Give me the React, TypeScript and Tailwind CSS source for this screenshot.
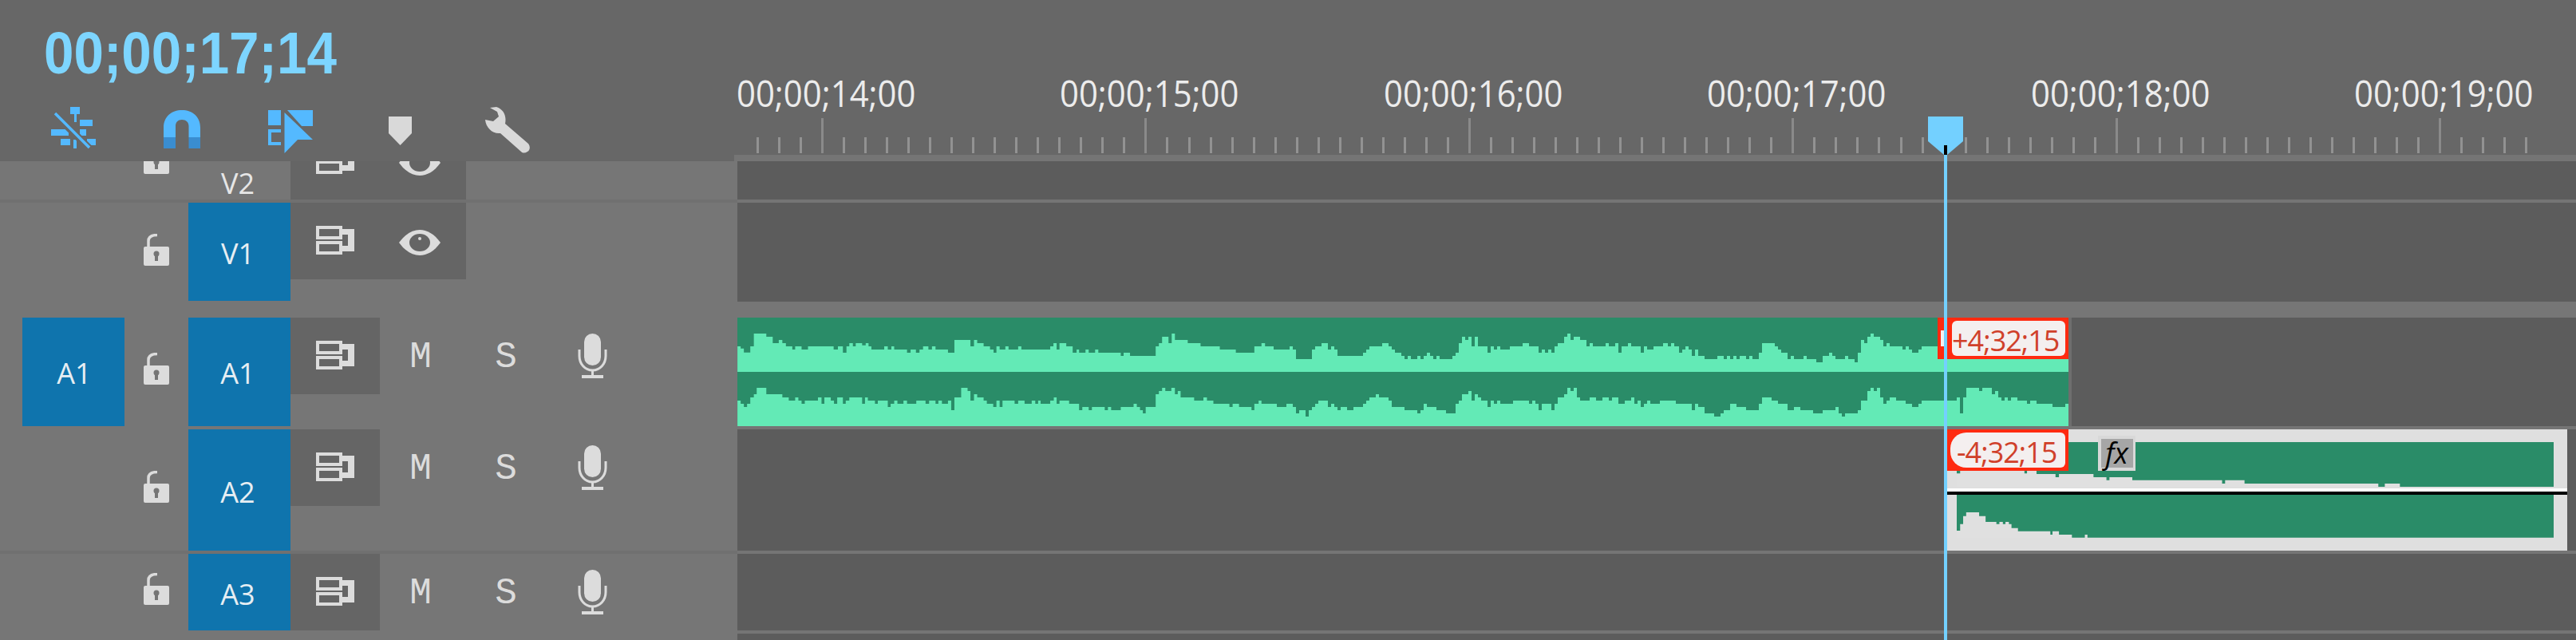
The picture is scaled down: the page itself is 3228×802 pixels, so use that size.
import React from 'react'

type Step = [number, number]

const seg1: Step[] = [[54,132],[63,140],[72,155],[90,132],[100,84],[135,96],[153,120],[170,108],[180,120],[190,132],[208,144],[216,132],[234,144],[252,132],[324,144],[336,132],[350,156],[360,132],[368,120],[378,132],[386,120],[404,128],[414,120],[422,132],[430,144],[466,132],[476,144],[486,132],[494,144],[530,156],[540,144],[555,156],[565,144],[575,132],[590,144],[600,132],[610,144],[645,156],[663,108],[708,132],[718,108],[727,120],[745,132],[763,144],[773,156],[781,132],[790,144],[806,132],[815,144],[842,132],[851,144],[932,132],[941,120],[950,144],[958,120],[977,132],[995,156],[1006,144],[1013,156],[1031,144],[1040,156],[1058,144],[1067,156],[1130,168],[1138,156],[1156,168],[1228,132],[1237,120],[1246,96],[1264,120],[1273,84],[1282,108],[1318,120],[1354,132],[1408,144],[1453,156],[1505,132],[1525,120],[1535,132]]
const seg2: Step[] = [[0,120],[18,132],[78,120],[90,132],[102,168],[162,132],[174,120],[198,108],[222,132],[234,120],[246,132],[258,156],[354,144],[366,132],[378,120],[426,108],[450,120],[462,132],[474,144],[498,156],[510,168],[522,156],[534,168],[558,156],[570,168],[582,156],[594,144],[606,156],[618,168],[630,156],[642,168],[690,156],[702,144],[714,108],[726,84],[738,96],[750,84],[762,120],[774,84],[786,120],[822,144],[834,120],[846,132],[858,120],[870,132],[906,120],[954,108],[978,120],[1014,144],[1026,132],[1038,144],[1050,132],[1062,144],[1074,120],[1086,108],[1110,84],[1122,72],[1134,96],[1146,84],[1170,96],[1194,120],[1206,108],[1218,120],[1266,108],[1278,120],[1302,108],[1314,144],[1326,120],[1350,108],[1362,120],[1398,144],[1410,120],[1422,132],[1446,120],[1482,108]]
const seg3: Step[] = [[0,120],[12,108],[24,120],[42,144],[54,132],[66,120],[78,132],[90,156],[102,132],[114,156],[138,168],[186,156],[210,168],[222,156],[234,168],[246,156],[258,168],[270,156],[294,168],[306,156],[318,168],[342,144],[354,108],[402,120],[414,132],[426,144],[450,168],[462,156],[474,168],[510,156],[522,168],[558,180],[582,156],[606,144],[618,156],[630,168],[666,156],[678,168],[702,180],[714,144],[726,96],[738,108],[750,84],[762,72],[774,84],[798,96],[810,120],[822,108],[834,120],[882,132],[894,120],[906,132],[918,144],[942,132],[954,120]]

const low1: Step[] = [[54,336],[63,348],[72,360],[81,348],[90,324],[100,312],[108,288],[135,312],[180,324],[198,336],[216,324],[225,336],[234,348],[243,336],[280,324],[290,348],[298,324],[316,336],[325,348],[334,324],[350,348],[358,336],[368,324],[404,348],[412,324],[420,336],[440,348],[448,336],[476,360],[484,348],[494,336],[503,348],[520,336],[530,348],[556,336],[582,348],[592,336],[610,348],[618,336],[628,348],[645,336],[654,372],[663,324],[682,288],[700,300],[708,336],[718,312],[727,324],[745,336],[754,348],[772,360],[781,336],[790,360],[798,336],[832,348],[842,336],[860,348],[880,336],[890,348],[898,336],[905,348],[932,336],[942,324],[950,348],[958,336],[985,348],[1013,372],[1022,360],[1040,372],[1049,360],[1085,372],[1094,360],[1103,372],[1130,360],[1166,348],[1175,360],[1184,372],[1192,384],[1200,360],[1228,312],[1237,300],[1246,288],[1255,300],[1272,288],[1282,312],[1290,300],[1298,324],[1336,336],[1362,324],[1372,336],[1390,348],[1435,360],[1444,348],[1462,360],[1497,372],[1505,348],[1517,336],[1525,348]]
const low2: Step[] = [[0,336],[30,348],[66,336],[90,348],[102,372],[114,360],[138,384],[150,360],[162,348],[174,336],[186,324],[222,348],[234,336],[246,348],[258,360],[270,348],[294,360],[318,348],[354,336],[366,324],[378,312],[402,300],[414,312],[450,324],[462,348],[510,360],[558,372],[570,360],[582,336],[594,348],[630,360],[666,372],[702,336],[714,324],[726,300],[750,288],[762,324],[774,300],[786,312],[798,324],[810,324],[822,348],[834,324],[846,336],[858,324],[870,336],[918,324],[978,336],[990,324],[1002,336],[1014,360],[1026,336],[1062,360],[1074,336],[1086,312],[1110,300],[1122,276],[1134,288],[1146,276],[1158,312],[1170,324],[1206,312],[1230,324],[1254,312],[1278,324],[1290,312],[1314,336],[1338,324],[1362,312],[1374,336],[1386,324],[1398,348],[1410,336],[1422,324],[1434,336],[1470,324]]
const low3: Step[] = [[0,324],[30,336],[90,360],[102,336],[114,348],[138,372],[174,384],[198,372],[210,360],[234,336],[258,348],[294,360],[342,336],[354,312],[390,324],[414,336],[450,360],[474,348],[498,360],[546,372],[582,360],[630,348],[642,372],[654,384],[666,372],[714,360],[726,324],[750,288],[762,276],[774,288],[786,276],[798,312],[810,336],[822,324],[834,312],[858,324],[894,336],[918,348],[942,336],[954,324],[1086,312],[1098,372],[1110,312],[1122,276],[1170,288],[1182,276],[1218,300],[1230,288],[1242,312],[1254,324],[1266,312],[1278,324],[1290,312],[1314,324],[1350,336],[1362,324],[1386,336],[1446,348],[1494,336]]

const wide = (s: Step[], base: number, k: number, top: number): Step[] => s.map(([x, y]) => [base + x * k, top + y / 3])

const a1Upper = [...wide(seg1, 900, 0.4464, 390), ...wide(seg2, 1590, 1 / 3, 394), ...wide(seg3, 2090, 1 / 3, 394)]
const a1Lower = [...wide(low1, 900, 0.4464, 390), ...wide(low2, 1590, 1 / 3, 394), ...wide(low3, 2090, 1 / 3, 394)]

const a2Upper = wide([[133,640],[141,628],[290,640],[296,628],[318,642],[362,654],[370,642],[450,654],[480,665],[487,654],[540,665],[748,678],[755,665],[800,678],[1110,690],[1125,678],[1160,690]], 2380, 0.5408, 380)
const a2Lower = wide([[133,855],[141,830],[148,800],[155,786],[175,786],[185,800],[200,822],[225,830],[232,822],[240,830],[246,822],[254,830],[260,845],[275,857],[350,870],[355,857],[370,870],[400,881],[430,870],[436,881]], 2380, 0.5408, 380)

function Wave({ steps, x, y, w, h, fill }: { steps: Step[]; x: number; y: number; w: number; h: number; fill: string }) {
    const bottom = y + h
    let d = `M${steps[0][0]} ${bottom}`
    steps.forEach(([sx, sy], i) => {
        const next = i < steps.length - 1 ? steps[i + 1][0] : x + w
        d += `L${sx} ${sy}L${next} ${sy}`
    })
    d += `L${x + w} ${bottom}Z`
    return (
        <svg viewBox={`${x} ${y} ${w} ${h}`} width={w} height={h} className="block" preserveAspectRatio="none">
            <path d={d} fill={fill} />
        </svg>
    )
}

const labels = ['00;00;14;00', '00;00;15;00', '00;00;16;00', '00;00;17;00', '00;00;18;00', '00;00;19;00']

function RulerTicks() {
    const ticks = []
    for (let i = -3; i < 80; i++) {
        const x = Math.round(1029 + i * 27.03)
        const major = ((i % 15) + 15) % 15 === 0
        ticks.push(<rect key={i} x={x} y={major ? 148 : 172} width="3" height={major ? 44 : 20} fill={major ? '#8a8a8a' : '#929292'} />)
    }
    return (
        <svg viewBox="920 148 2308 46" width="2308" height="46" className="block">
            {ticks}
        </svg>
    )
}

function Ripple() {
    return (
        <svg viewBox="64 134 56 58" width="56" height="58" className="block">
            <g fill="#54b9ff">
                <rect x="88" y="134" width="12" height="9" />
                <rect x="93" y="143" width="3" height="10" />
                <rect x="100" y="150" width="16" height="8" />
                <rect x="64" y="162" width="22" height="8" />
                <rect x="100" y="162" width="8" height="8" />
                <rect x="76" y="174" width="12" height="8" />
                <rect x="92" y="175" width="4" height="11" />
                <rect x="109" y="174" width="11" height="8" />
            </g>
            <path d="M68 142L112 186" stroke="#676767" strokeWidth="9" />
            <path d="M69 142L112 185" stroke="#54b9ff" strokeWidth="3.5" />
        </svg>
    )
}

function Magnet() {
    return (
        <svg viewBox="205 134 46 58" width="46" height="58" className="block">
            <path d="M205 172V160C205 146 215 138 228 138C241 138 251 146 251 160V172H236.5V158C236.5 153 233 150 228 150C223 150 220 153 220 158V172Z" fill="#54b9ff" />
            <path d="M205 172H220V186H205ZM236.5 172H251V186H236.5Z" fill="#3a8dd0" />
        </svg>
    )
}

function Linked() {
    return (
        <svg viewBox="336 134 56 58" width="56" height="58" className="block">
            <g fill="#54b9ff">
                <rect x="336" y="138" width="16" height="19" />
                <path d="M360 138H392V158H378Z" />
                <path d="M356.5 141L392 175H373L356.5 192Z" />
            </g>
            <path d="M352 164H338V180H352" fill="none" stroke="#54b9ff" strokeWidth="4" />
        </svg>
    )
}

function MarkerIcon() {
    return (
        <svg viewBox="487 134 29 58" width="29" height="58" className="block">
            <path d="M487 146H516V167L501.5 182L487 167Z" fill="#d9d9d9" />
        </svg>
    )
}

function Wrench() {
    return (
        <svg viewBox="607 134 57 58" width="57" height="58" className="block">
            <path d="M614 135L622 134C631 137 635 145 633 155L662 180C665 184 664 188 661 190C658 192 655 192 653 190L627 167C617 168 609 160 608 150L618 152L625 146L623 140Z" fill="#d9d9d9" />
        </svg>
    )
}

function LockIcon() {
    return (
        <svg viewBox="0 0 32 40" width="32" height="40" className="block shrink-0">
            <path d="M6 17V9C6 4 10 1.5 17 1.5" fill="none" stroke="#dcdcdc" strokeWidth="3.5" />
            <rect x="0" y="16" width="32" height="24" rx="2" fill="#dcdcdc" />
            <circle cx="16" cy="25" r="3.5" fill="#757575" />
            <rect x="14" y="26" width="4" height="8" fill="#757575" />
        </svg>
    )
}

function SyncIcon() {
    return (
        <svg viewBox="0 0 48 36" width="48" height="36" className="block shrink-0">
            <rect x="2" y="2" width="29" height="13" fill="none" stroke="#dcdcdc" strokeWidth="4" />
            <rect x="2" y="21" width="29" height="13" fill="none" stroke="#dcdcdc" strokeWidth="4" />
            <path d="M33 4H48V32H33V25H40V11H33Z" fill="#dcdcdc" />
        </svg>
    )
}

function EyeIcon() {
    return (
        <svg viewBox="0 0 52 32" width="52" height="32" className="block shrink-0">
            <path d="M0 16C8 5 17 0 26 0C35 0 44 5 52 16C44 27 35 32 26 32C17 32 8 27 0 16Z" fill="#dcdcdc" />
            <ellipse cx="26" cy="16" rx="13" ry="11" fill="#656565" />
            <circle cx="26" cy="11" r="2" fill="#dcdcdc" />
        </svg>
    )
}

function MicIcon() {
    return (
        <svg viewBox="0 0 37 56" width="37" height="56" className="block">
            <rect x="8" y="0" width="21" height="40" rx="10.5" fill="#dcdcdc" />
            <path d="M2 20V28C2 38 9 46 18.5 46C28 46 35 38 35 28V20" fill="none" stroke="#dcdcdc" strokeWidth="3" />
            <rect x="17" y="46" width="3" height="7" fill="#dcdcdc" />
            <rect x="5" y="52" width="27" height="4" fill="#dcdcdc" />
        </svg>
    )
}

function AudioHeader({ name, lockTop, labelPad, source }: { name: string; lockTop: string; labelPad: string; source?: string }) {
    return (
        <div className="w-[924px] h-full bg-[#767676] flex items-start pl-[28px] shrink-0">
            <div className="w-[128px] h-full">
                {source && (
                    <div className="h-full bg-[#0f74ad] flex items-center justify-center pt-[4px] pl-[2px] text-[36px] text-[#e6eef3]">{source}</div>
                )}
            </div>
            <div className={`w-[80px] flex justify-center ${lockTop}`}>
                <LockIcon />
            </div>
            <div className={`w-[128px] h-full bg-[#0f74ad] flex items-center justify-center pr-[4px] text-[36px] text-[#e6eef3] ${labelPad}`}>{name}</div>
            <div className="w-[112px] h-[96px] bg-[#656565] flex justify-center pt-[29px]">
                <SyncIcon />
            </div>
            <div className="w-[104px] flex justify-center pt-[26px] pr-[2px] text-[46px] leading-[48px] text-[#dcdcdc] font-['Liberation_Mono',monospace]">M</div>
            <div className="w-[108px] flex justify-center pt-[26px] text-[46px] leading-[48px] text-[#dcdcdc] font-['Liberation_Mono',monospace]">S</div>
            <div className="w-[108px] flex justify-center pt-[20px]">
                <MicIcon />
            </div>
        </div>
    )
}

function Badge({ text, sign }: { text: string; sign: 'plus' | 'minus' }) {
    const inner = sign === 'plus'
        ? 'rounded-[6px] ml-[2px]'
        : 'rounded-l-[20px] rounded-r-[6px] pl-[8px]'
    return (
        <div className="w-[152px] h-[52px] bg-[#ff2a10] p-[4px] flex">
            <div className={`flex-1 h-full bg-[#f4efef] flex items-center text-[36px] tracking-[-1px] leading-none text-[#d0402a] ${inner}`}>
                <span className="mt-[5px]">{text}</span>
            </div>
        </div>
    )
}

export default function App() {
    return (
        <div className="relative w-[3228px] h-[802px] overflow-hidden bg-[#5c5c5c] font-['Open_Sans',sans-serif]">
            {/* Timecode, toolbar and ruler */}
            <div className="flex h-[202px] bg-[#676767]">
                <div className="w-[920px] shrink-0">
                    <div className="pl-[55px] pt-[27px] h-[134px] text-[74px] leading-[80px] font-bold text-[#7dd5ff] font-['Liberation_Sans',sans-serif]">
                        <span className="inline-block origin-left scale-x-[0.91]">00;00;17;14</span>
                    </div>
                    <div className="flex pl-[64px]">
                        <Ripple />
                        <div className="ml-[85px]"><Magnet /></div>
                        <div className="ml-[85px]"><Linked /></div>
                        <div className="ml-[95px]"><MarkerIcon /></div>
                        <div className="ml-[91px]"><Wrench /></div>
                    </div>
                </div>
                <div className="flex-1 flex flex-col">
                    <div className="h-[148px] flex pl-[3px] pt-[88px]">
                        {labels.map((label) => (
                            <div key={label} className="w-[405.4px] shrink-0 text-[46px] leading-[56px] text-[#ececec]">
                                <span className="inline-block origin-left scale-x-[0.91]">{label}</span>
                            </div>
                        ))}
                    </div>
                    <RulerTicks />
                    <div className="h-[8px] bg-[#757575]" />
                </div>
            </div>

            {/* V2, scrolled up under the header, icons are clipped by their own cells */}
            <div className="flex h-[48px]">
                <div className="w-[924px] shrink-0 bg-[#767676] flex items-end pl-[156px]">
                    <div className="w-[80px] h-full overflow-hidden flex items-end justify-center pb-[32px]"><LockIcon /></div>
                    <div className="w-[128px] text-center text-[36px] leading-[40px] pr-[4px] text-[#e6e6e6]">V2</div>
                    <div className="w-[220px] h-full overflow-hidden bg-[#656565] flex items-end">
                        <div className="w-[112px] flex justify-center pb-[32px]"><SyncIcon /></div>
                        <div className="w-[100px] flex justify-center pb-[30px]"><EyeIcon /></div>
                    </div>
                </div>
                <div className="flex-1" />
            </div>
            <div className="flex h-[4px]">
                <div className="w-[924px] shrink-0 bg-[#707070]" />
                <div className="flex-1 bg-[#757575]" />
            </div>

            {/* V1 */}
            <div className="flex h-[124px]">
                <div className="w-[924px] shrink-0 bg-[#767676] flex items-start pl-[156px]">
                    <div className="w-[80px] flex justify-center pt-[39px]"><LockIcon /></div>
                    <div className="w-[128px] h-[123px] bg-[#0f74ad] flex items-center justify-center pt-[4px] pr-[4px] text-[36px] text-[#e6eef3]">V1</div>
                    <div className="w-[220px] h-[96px] bg-[#656565] flex">
                        <div className="w-[112px] flex justify-center pt-[29px]"><SyncIcon /></div>
                        <div className="w-[100px] flex justify-center pt-[34px]"><EyeIcon /></div>
                    </div>
                </div>
                <div className="flex-1" />
            </div>
            <div className="h-[20px] bg-[#767676]" />

            {/* A1 */}
            <div className="flex h-[136px]">
                <AudioHeader name="A1" source="A1" lockTop="pt-[44px]" labelPad="pt-[4px]" />
                <div className="flex-1 flex">
                    <div className="relative w-[1668px] h-full bg-[#2a8c68] shrink-0">
                        <Wave steps={a1Upper} x={924} y={398} w={1668} h={68} fill="#63eab6" />
                        <Wave steps={a1Lower} x={924} y={466} w={1668} h={68} fill="#63eab6" />
                        <div className="absolute right-0 top-0 flex items-start">
                            <div className="w-[12px] h-[52px] bg-[#ff2a10] flex items-center">
                                <div className="ml-[4px] w-[4px] h-[20px] bg-[#f4efef]" />
                            </div>
                            <Badge text="+4;32;15" sign="plus" />
                        </div>
                    </div>
                    <div className="w-[4px] h-full bg-[#6e6e6e]" />
                </div>
            </div>
            <div className="flex h-[4px]">
                <div className="w-[924px] shrink-0 bg-[#767676]" />
                <div className="flex-1 bg-[#757575]" />
            </div>

            {/* A2, selected clip */}
            <div className="flex h-[152px]">
                <AudioHeader name="A2" lockTop="pt-[52px]" labelPad="pt-[6px]" />
                <div className="flex-1 pl-[1516px]">
                    <div className="relative w-[777px] h-full bg-[#dfdfdf] pt-[16px]">
                        <div className="ml-[12px] w-[748px] bg-[#2a8c68]">
                            <Wave steps={a2Upper} x={2452} y={554} w={748} h={56} fill="#e0e0e0" />
                        </div>
                        <div className="mt-[2px] h-[4px] bg-white" />
                        <div className="h-[4px] bg-black" />
                        <div className="ml-[12px] w-[748px] bg-[#2a8c68]">
                            <Wave steps={a2Lower} x={2452} y={620} w={748} h={54} fill="#e0e0e0" />
                        </div>
                        <div className="absolute left-0 top-0">
                            <Badge text="-4;32;15" sign="minus" />
                        </div>
                        <div className="absolute left-[189px] top-[8px] w-[47px] h-[44px] bg-[#d8d8d8] flex items-center justify-center">
                            <div className="w-[40px] h-[36px] bg-[#a6a6a6] flex items-center justify-center text-[36px] leading-none italic text-black">fx</div>
                        </div>
                    </div>
                </div>
            </div>
            <div className="flex h-[4px]">
                <div className="w-[924px] shrink-0 bg-[#707070]" />
                <div className="flex-1 bg-[#757575]" />
            </div>

            {/* A3 */}
            <div className="flex h-[96px]">
                <AudioHeader name="A3" lockTop="pt-[24px]" labelPad="pt-[6px]" />
                <div className="flex-1" />
            </div>
            <div className="flex h-[4px]">
                <div className="w-[924px] shrink-0 bg-[#767676]" />
                <div className="flex-1 bg-[#757575]" />
            </div>
            <div className="flex h-[8px]">
                <div className="w-[924px] shrink-0 bg-[#767676]" />
                <div className="flex-1" />
            </div>

            {/* Playhead over everything */}
            <svg viewBox="0 0 44 48" width="44" height="48" className="absolute left-[2416px] top-[146px]">
                <path d="M0 0H44V31L24 48H20L0 31Z" fill="#73d0ff" />
                <rect x="20" y="36" width="4" height="12" fill="#000" />
            </svg>
            <div className="absolute left-[2436px] top-[194px] bottom-0 w-[4px] bg-[#73d0ff]" />
        </div>
    )
}
